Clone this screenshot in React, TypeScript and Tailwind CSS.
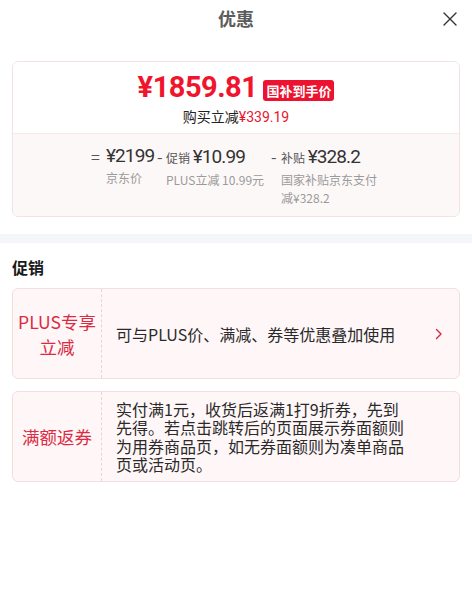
import React from "react";

const cjk = "font-['Noto_Sans_CJK_SC','Noto_Sans',sans-serif]";
const num = "font-['Roboto','Noto_Sans_CJK_SC',sans-serif]";

function Chevron() {
  return (
    <svg width="8" height="12" viewBox="0 0 8 12" fill="none">
      <path d="M1.5 1.5 L6 6 L1.5 10.5" stroke="#d2293f" strokeWidth="1.4" strokeLinecap="round" strokeLinejoin="round" />
    </svg>
  );
}

export default function App() {
  return (
    <div className={`w-[472px] h-[608px] bg-white ${cjk}`}>
      {/* header */}
      <div className="relative h-[37px] flex items-center justify-center">
        <span className="text-[18px] font-bold text-[#5c5c5c]">优惠</span>
        <svg className="absolute right-[15px] top-[12px]" width="14" height="14" viewBox="0 0 14 14">
          <path d="M1 1 L13 13 M13 1 L1 13" stroke="#333" strokeWidth="1.4" strokeLinecap="round" />
        </svg>
      </div>

      {/* price card */}
      <div className="px-3 pt-6">
        <div className="rounded-[6px] border border-[#f1e3e5] overflow-hidden">
          <div className="bg-white pt-[8px] pb-[6px] border-b border-[#f6e7e9] flex flex-col items-center">
            <div className="flex items-center h-[34px]">
              <span className={`${num} text-[29px] font-bold tracking-[-0.5px] text-[#f0142d] leading-[34px]`}>¥1859.81</span>
              <span className="ml-[6px] mt-[6px] bg-[#ec1230] text-white text-[13px] font-bold leading-[21px] px-[3px] rounded-[3px]">国补到手价</span>
            </div>
            <div className="text-[14px] leading-[20px] text-[#222] mt-[2px]">
              购买立减<span className={`${num} text-[#e8162f]`}>¥339.19</span>
            </div>
          </div>
          <div className="bg-[#fdf8f8] pt-[9px] pb-[9px] flex justify-center">
            <div className="flex w-[66px]">
              <span className="w-[15px] text-[16px] leading-[26px] text-[#555]">=</span>
              <div className="flex flex-col">
                <span className={`${num} text-[19px] leading-[26px] tracking-[-0.9px] text-[#333]`}>¥2199</span>
                <span className="text-[12px] leading-[18px] text-[#9a9a9a]">京东价</span>
              </div>
            </div>
            <div className="flex w-[114px]">
              <span className="w-[9px] text-[16px] leading-[26px] text-[#555]">-</span>
              <div className="flex flex-col">
                <span className="leading-[26px] whitespace-nowrap">
                  <span className="text-[12px] text-[#555]">促销 </span>
                  <span className={`${num} text-[19px] tracking-[-0.9px] text-[#333]`}>¥10.99</span>
                </span>
                <span className="text-[12px] leading-[18px] text-[#9a9a9a] whitespace-nowrap">PLUS立减 10.99元</span>
              </div>
            </div>
            <div className="flex w-[110px]">
              <span className="w-[10px] text-[16px] leading-[26px] text-[#555]">-</span>
              <div className="flex flex-col w-[100px]">
                <span className="leading-[26px] whitespace-nowrap">
                  <span className="text-[12px] text-[#555]">补贴 </span>
                  <span className={`${num} text-[19px] tracking-[-0.9px] text-[#333]`}>¥328.2</span>
                </span>
                <span className="text-[12px] leading-[18px] text-[#9a9a9a]">国家补贴京东支付减¥328.2</span>
              </div>
            </div>
          </div>
        </div>
      </div>

      {/* divider band */}
      <div className="mt-[17px] h-[9px] bg-[#f5f6fa]" />

      {/* promotions */}
      <div className="px-3 pt-[13px]">
        <div className="text-[16px] leading-[22px] font-bold text-[#1a1a1a]">促销</div>

        <div className="mt-[10px] flex min-h-[91px] rounded-[6px] border border-[#f2dfe2] bg-[#fef6f7]">
          <div className="w-[89px] shrink-0 flex items-center justify-center border-r border-dashed border-[#e9d3d7] text-center text-[17.5px] leading-[25px] text-[#dc2a43]">
            PLUS专享<br />立减
          </div>
          <div className="flex-1 flex items-center pl-[14px] pr-[16px]">
            <span className="flex-1 text-[16px] text-[#2a2a2a]">可与PLUS价、满减、券等优惠叠加使用</span>
            <Chevron />
          </div>
        </div>

        <div className="mt-[12px] flex min-h-[91px] rounded-[6px] border border-[#f2dfe2] bg-[#fef6f7]">
          <div className="w-[89px] shrink-0 flex items-center justify-center border-r border-dashed border-[#e9d3d7] text-center text-[17.5px] leading-[25px] text-[#dc2a43]">
            满额返券
          </div>
          <div className="flex-1 flex items-center pl-[14px] py-[7px]">
            <span className="w-[294px] text-[16px] leading-[18.5px] text-[#2a2a2a]">
              实付满1元，收货后返满1打9折券，先到先得。若点击跳转后的页面展示券面额则为用券商品页，如无券面额则为凑单商品页或活动页。
            </span>
          </div>
        </div>
      </div>
    </div>
  );
}
